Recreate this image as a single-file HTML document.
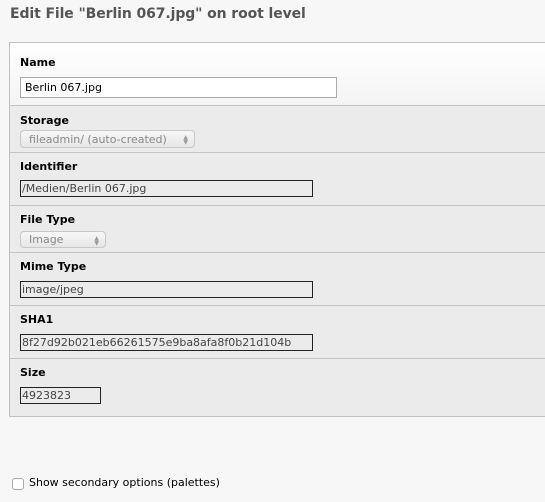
<!DOCTYPE html>
<html><head><style>
body{margin:0;width:545px;height:502px;background:#f7f7f7;font-family:Verdana,"DejaVu Sans",sans-serif;position:relative;overflow:hidden}
.a{position:absolute}
h1{position:absolute;left:10px;top:6px;margin:0;font-size:14px;font-weight:bold;color:#555;font-family:Verdana,"DejaVu Sans",sans-serif;letter-spacing:-0.1px}
.panel{position:absolute;left:9px;top:42px;width:560px;height:373px;border:1px solid #c0c0c0;border-right:none;background:#ebebeb}
.row{position:absolute;left:0;width:560px;border-bottom:1px solid #c4c4c4}
.lbl{position:absolute;left:10px;font-size:11px;font-weight:bold;color:#000}
.inp{position:absolute;left:10px;height:15px;border:1px solid #222;font-size:11px;color:#444;line-height:15px;padding-left:1px;box-sizing:content-box}
.sel{position:absolute;left:10px;height:15px;border:1px solid #c8c8c8;border-radius:4px;background:linear-gradient(#f7f7f7,#e6e6e6);font-size:11px;color:#888;line-height:15px;padding-left:8px;box-sizing:border-box}
.sel span{position:absolute;right:6px;top:0;font-size:6px;color:#999;line-height:5px}
</style></head><body>
<h1>Edit File "Berlin 067.jpg" on root level</h1>
<div class="panel">
 <div class="row" style="top:0;height:62px;background:linear-gradient(#fff,#f4f4f4)">
  <div class="lbl" style="top:13px">Name</div>
  <div class="inp" style="top:34px;width:311px;height:19px;line-height:19px;border:1px solid #aaa;background:#fff;color:#000;padding-left:4px">Berlin 067.jpg</div>
 </div>
 <div class="row" style="top:63px;height:46px">
  <div class="lbl" style="top:8px">Storage</div>
  <div class="sel" style="top:24px;width:175px;height:18px;line-height:17px">fileadmin/ (auto-created)<span style="top:4px">▲<br>▼</span></div>
 </div>
 <div class="row" style="top:110px;height:52px">
  <div class="lbl" style="top:7px">Identifier</div>
  <div class="inp" style="top:27px;width:290px">/Medien/Berlin 067.jpg</div>
 </div>
 <div class="row" style="top:163px;height:46px">
  <div class="lbl" style="top:7px">File Type</div>
  <div class="sel" style="top:25px;width:86px;height:17px">Image<span style="top:4px">▲<br>▼</span></div>
 </div>
 <div class="row" style="top:210px;height:52px">
  <div class="lbl" style="top:7px">Mime Type</div>
  <div class="inp" style="top:28px;width:290px">image/jpeg</div>
 </div>
 <div class="row" style="top:263px;height:52px">
  <div class="lbl" style="top:7px">SHA1</div>
  <div class="inp" style="top:28px;width:290px">8f27d92b021eb66261575e9ba8afa8f0b21d104b</div>
 </div>
 <div class="row" style="top:316px;height:57px;border-bottom:none">
  <div class="lbl" style="top:7px">Size</div>
  <div class="inp" style="top:28px;width:78px">4923823</div>
 </div>
</div>
<div class="a" style="left:12px;top:478px;width:10px;height:10px;border:1px solid #aaa;border-radius:3px;background:#fff"></div>
<div class="a" style="left:29px;top:476px;font-size:11px;color:#000">Show secondary options (palettes)</div>
</body></html>
